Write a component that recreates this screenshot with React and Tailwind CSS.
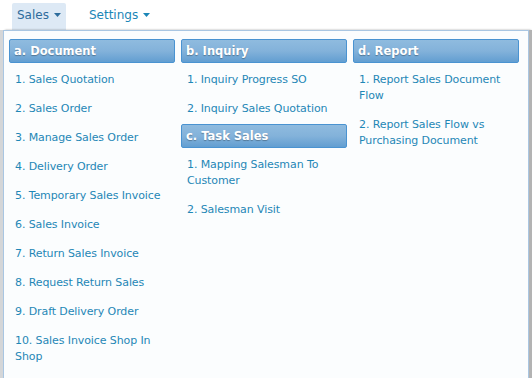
import React from 'react';

const columns = [
  [
    {
      title: 'a. Document',
      items: [
        '1. Sales Quotation',
        '2. Sales Order',
        '3. Manage Sales Order',
        '4. Delivery Order',
        '5. Temporary Sales Invoice',
        '6. Sales Invoice',
        '7. Return Sales Invoice',
        '8. Request Return Sales',
        '9. Draft Delivery Order',
        '10. Sales Invoice Shop In Shop',
      ],
    },
  ],
  [
    { title: 'b. Inquiry', items: ['1. Inquiry Progress SO', '2. Inquiry Sales Quotation'] },
    { title: 'c. Task Sales', items: ['1. Mapping Salesman To Customer', '2. Salesman Visit'] },
  ],
  [
    {
      title: 'd. Report',
      items: ['1. Report Sales Document Flow', '2. Report Sales Flow vs Purchasing Document'],
    },
  ],
];

const Caret = () => (
  <svg width="7" height="4" viewBox="0 0 7 4" className="ml-[5px]">
    <path d="M0 0h7L3.5 4z" fill="currentColor" />
  </svg>
);

const App = () => {
  return (
    <div className="w-[532px] h-[378px] overflow-hidden bg-white font-['DejaVu_Sans',sans-serif]">
      <nav className="flex h-[30px] items-stretch pl-[12px] pt-[3px] text-[12px]">
        <div className="flex items-center rounded-t-[2px] bg-[#dde9f5] px-[5px] pb-[3px] text-[#2d6c9c]">
          Sales
          <Caret />
        </div>
        <div className="ml-[18px] flex items-center px-[5px] pb-[3px] text-[#1b86b7]">
          Settings
          <Caret />
        </div>
      </nav>

      <div className="flex">
        <div className="w-[3px] bg-[#d4d6d8]" />
        <div className="flex w-[526px] border border-[#a9c6e2] bg-[#fbfdfe] pl-[5px] pt-[8px] pb-[20px] shadow-[2px_0_2px_rgba(0,0,0,0.35)]">
          {columns.map((col, i) => (
            <div key={i} className="w-[172px] pr-[6px]">
              {col.map(group => (
                <div key={group.title} className="mb-[1px]">
                  <div className="h-[24px] rounded-[2px] border border-[#4a93d1] bg-gradient-to-b from-[#8fbbdf] via-[#83b2da] to-[#629ed1] px-[4px] text-[11.5px] font-bold leading-[22px] text-white [text-shadow:0_1px_1px_rgba(0,0,0,0.3)]">
                    {group.title}
                  </div>
                  <ul className="pt-[2px]">
                    {group.items.map(item => (
                      <li
                        key={item}
                        className="py-[6.5px] pl-[6px] pr-[4px] text-[11px] leading-[16px] tracking-[-0.1px] text-[#1f87b6]"
                      >
                        {item}
                      </li>
                    ))}
                  </ul>
                </div>
              ))}
            </div>
          ))}
        </div>
        <div className="w-[3px] bg-[#b3b3b3]" />
      </div>
    </div>
  );
};

export default App;
